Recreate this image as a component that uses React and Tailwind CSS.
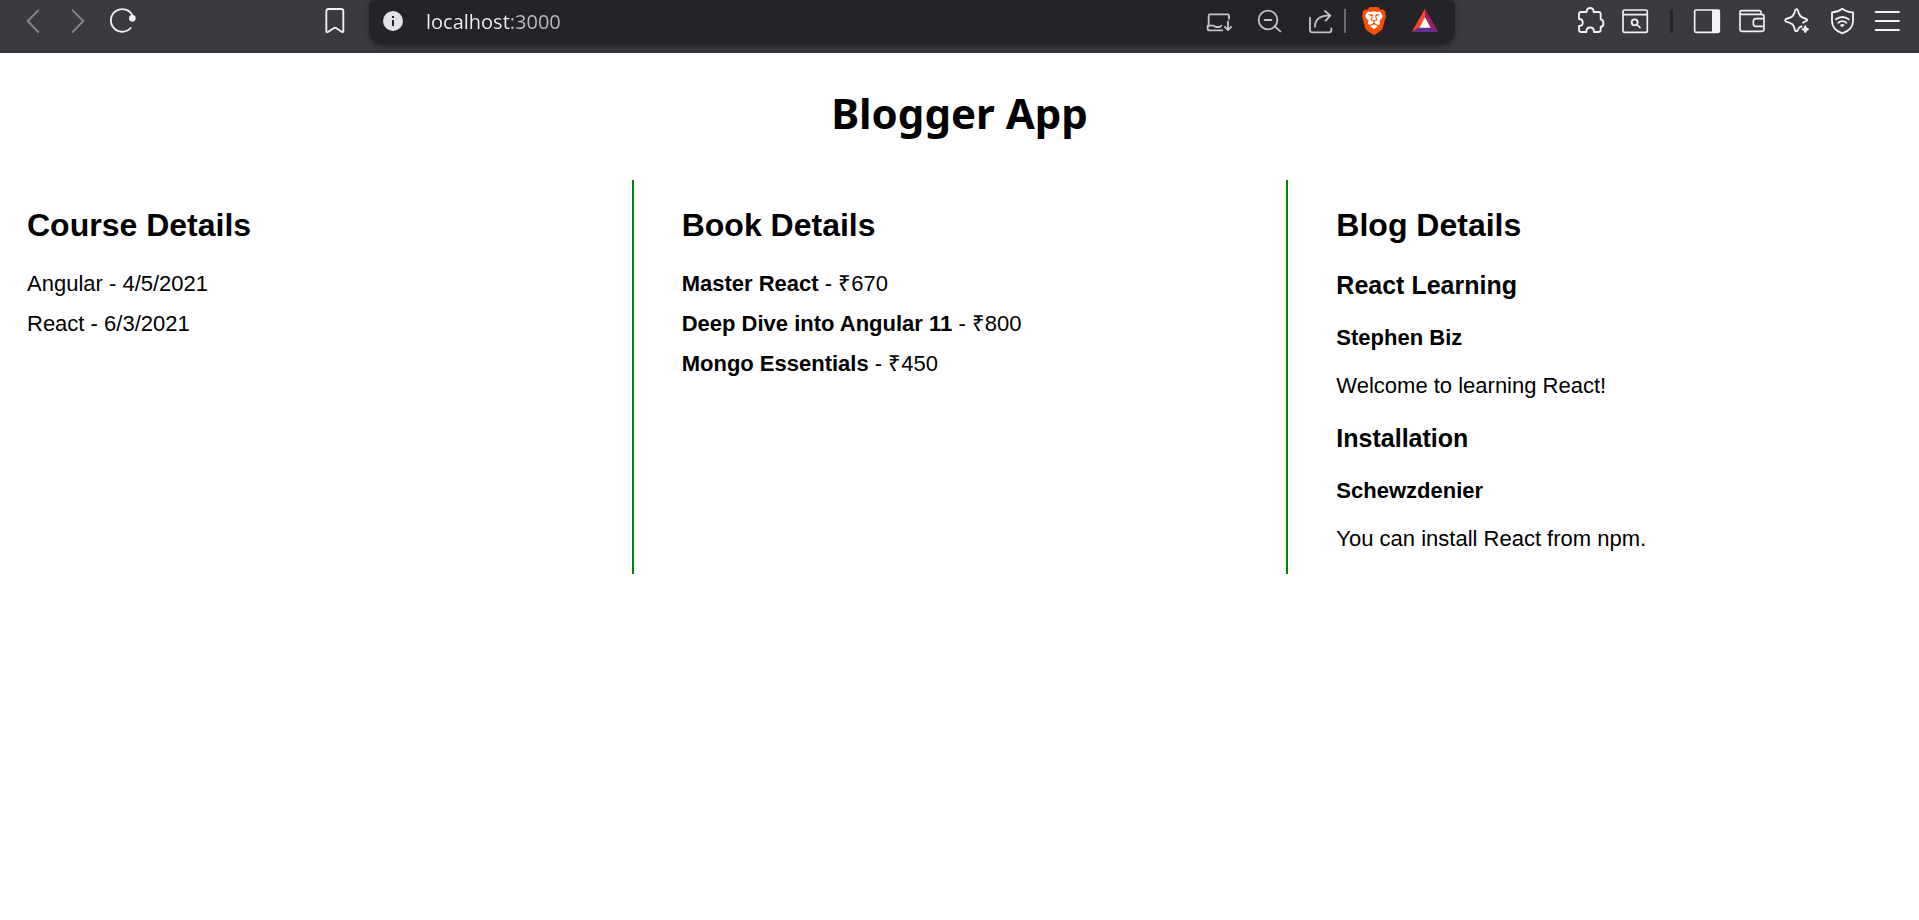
import React from "react";
import { SiBrave } from "react-icons/si";

/* Toolbar glyphs are drawn on a grid of three units to the pixel. */
function ToolButton({ label, x, children, muted }) {
  return (
    <button
      type="button"
      aria-label={label}
      className={muted ? "h-[42px] w-[45px] shrink-0 text-[#88878b]" : "h-[42px] w-[45px] shrink-0 text-[#f2f1f5]"}
    >
      <svg
        viewBox={`${x} 0 135 126`}
        className="size-full"
        fill="none"
        stroke="currentColor"
        strokeWidth="5.5"
        strokeLinecap="round"
        strokeLinejoin="round"
        aria-hidden="true"
      >
        {children}
      </svg>
    </button>
  );
}

function AddressButton({ label, x, children }) {
  return (
    <button type="button" aria-label={label} className="h-[42px] w-[50px] shrink-0 text-[#c4c3c9]">
      <svg
        viewBox={`${x} 0 150 126`}
        className="size-full"
        fill="none"
        stroke="currentColor"
        strokeWidth="5.5"
        strokeLinecap="round"
        strokeLinejoin="round"
        aria-hidden="true"
      >
        {children}
      </svg>
    </button>
  );
}

function AddressBar() {
  return (
    <div className="flex h-[45px] min-w-0 flex-1 items-start rounded-t-md rounded-b-[14px] bg-[#242328] pr-[5px] pl-[14px] shadow-[0_2px_6px_rgba(0,0,0,0.3)]">
      <button type="button" aria-label="Site information" className="flex h-[42px] w-5 shrink-0 items-center">
        <svg viewBox="0 0 20 20" className="size-5" aria-hidden="true">
          <circle cx="10" cy="10" r="10" fill="#e3e2e7" />
          <path d="M9 5h2v2H9zM9 9h2v6H9z" fill="#242328" />
        </svg>
      </button>
      <input
        aria-label="Address"
        defaultValue="localhost:3000"
        className="ml-[23px] h-[42px] min-w-0 flex-1 bg-[linear-gradient(90deg,#f2f2f6_84px,#bfbec4_84px)] bg-clip-text font-['Open_Sans','Noto_Sans',sans-serif] text-xl text-transparent outline-none"
      />
      <AddressButton label="Install app" x={42}>
        <path d="M86 78V47q0-4 4-4h53q4 0 4 4v9M83 77h19q2 4 7 4h8q5 0 7-4M83 77v9q0 5 5 5h39M144 64v26M135 81l9 9 9-9" />
      </AddressButton>
      <AddressButton label="Zoom out" x={192}>
        <circle cx="264" cy="60" r="28" />
        <path d="M284 79l17 15M254 60h20" />
      </AddressButton>
      <AddressButton label="Share" x={342}>
        <path d="M390 53v37q0 7 7 7h50q7 0 7-7v-5M405 80q0-34 46-34M435 33l16 14-14 15" />
      </AddressButton>
      <div className="mt-[9px] mr-1 h-6 w-[2px] shrink-0 bg-[#6d6c72]" />
      <button type="button" aria-label="Brave Shields" className="h-[42px] w-[50px] shrink-0">
        <svg viewBox="0 0 50 42" className="size-full" aria-hidden="true">
          <path d="M17 11h13l3 5-3 10-6 5-6-5-3-10z" fill="#fff" />
          <g transform="translate(10 7)">
            <SiBrave size={28} color="#fb5006" />
          </g>
        </svg>
      </button>
      <AddressButton label="Rewards" x={660}>
        <g stroke="none">
          <path d="M735 26L695 96L718 83L735 53Z" fill="#ff4724" />
          <path d="M735 26L775 96L752 83L735 53Z" fill="#9e1f63" />
          <path d="M695 96H775L752 82H718Z" fill="#662d91" />
          <path d="M735 52L718 83H752Z" fill="#fff" />
        </g>
      </AddressButton>
    </div>
  );
}

function BrowserBar() {
  return (
    <header className="flex h-[53px] items-start border-b-2 border-[#36333a] bg-[#3b3a3f]">
      <div className="flex w-[369px] shrink-0 items-start pr-3 pl-[10px]">
        <ToolButton label="Back" x={30} muted>
          <path d="M115 31L83 63l32 33" />
        </ToolButton>
        <ToolButton label="Forward" x={165} muted>
          <path d="M218 31l32 32-32 33" />
        </ToolButton>
        <ToolButton label="Reload" x={300}>
          <path d="M392 84A34 34 0 1 1 398 48" />
          <circle cx="397" cy="55" r="10" fill="currentColor" stroke="none" />
        </ToolButton>
        <div className="flex-1" />
        <ToolButton label="Bookmark" x={936}>
          <path d="M979 93V34q0-7 7-7h37q7 0 7 7v59q0 5-4 3l-18-12q-3-2-6 0l-18 12q-5 2-5-3z" />
        </ToolButton>
      </div>
      <AddressBar />
      <div className="flex w-[464px] shrink-0 items-start justify-end pr-[10px]">
        <ToolButton label="Extensions" x={24}>
          <path d="M63 36h17c0-16 21-16 21 0h15q6 0 6 6v16c11 1 11 22 0 23v8q0 7-7 7h-13c0-18-23-18-23 0H64q-7 0-7-7V78c15 0 15-21 0-21V42q0-6 6-6z" />
        </ToolButton>
        <ToolButton label="Search tabs" x={159}>
          <path strokeWidth="5" d="M194 30h63q5 0 5 5v57q0 5-5 5h-63q-5 0-5-5V35q0-5 5-5zM189 44h73M232 75l8 8" />
          <circle cx="224" cy="67" r="9" />
        </ToolButton>
        <div className="flex h-[42px] w-[26px] shrink-0 items-center justify-center">
          <div className="h-6 w-[3px] rounded-full bg-[#242328]" />
        </div>
        <ToolButton label="Sidebar" x={372}>
          <rect x="404" y="30" width="74" height="67" rx="4" strokeWidth="5" />
          <path d="M456 30h19q4 0 4 4v59q0 4-4 4h-19z" fill="currentColor" stroke="none" />
        </ToolButton>
        <ToolButton label="Wallet" x={507}>
          <path
            strokeWidth="5"
            d="M540 36q0-4 4-4h54q5 0 5 5v6M540 36v52q0 6 6 6h59q7 0 7-7V50q0-7-7-7h-60q-5 0-5-6M612 56h-24q-8 0-8 8v7q0 8 8 8h24"
          />
        </ToolButton>
        <ToolButton label="Assistant" x={642}>
          <path d="M725 79q-4 1-7 4-3 3-5 8-4 5-8 0-3-14-8-18-4-4-19-8-5-4 0-8 15-4 20-9 4-4 8-18 4-5 7 0 4 14 8 18 5 5 18 9 5 3 0 6-6 2-10 5" />
          <path d="M736 77q2 9 11 11-9 2-11 11-2-9-11-11 9-2 11-11z" fill="currentColor" strokeWidth="3" />
        </ToolButton>
        <ToolButton label="VPN" x={777}>
          <path d="M847 26q13 10 32 11v26q0 26-32 37-31-11-31-37V37q18-1 31-11z" />
          <path d="M828 58q19-14 38 0M835 68q12-9 24 0" />
          <path d="M841 75q6-4 12 0l-6 5z" fill="currentColor" strokeWidth="2" />
        </ToolButton>
        <ToolButton label="Menu" x={912}>
          <path d="M947 36h70M947 63h70M947 90h70" />
        </ToolButton>
      </div>
    </header>
  );
}

const courses = [
  { name: "Angular", date: "4/5/2021" },
  { name: "React", date: "6/3/2021" },
];

const books = [
  { name: "Master React", price: 670 },
  { name: "Deep Dive into Angular 11", price: 800 },
  { name: "Mongo Essentials", price: 450 },
];

const blogs = [
  { title: "React Learning", author: "Stephen Biz", text: "Welcome to learning React!" },
  { title: "Installation", author: "Schewzdenier", text: "You can install React from npm." },
];

function Column({ title, divided, children }) {
  return (
    <section className={divided ? "flex-1 border-r-2 border-[#008000] pt-[27px] pr-12 pb-[22px]" : "flex-1 pt-[27px] pb-[22px]"}>
      <h2 className="mb-7 text-[32px] leading-9 font-bold">{title}</h2>
      {children}
    </section>
  );
}

export default function App() {
  return (
    <div className="min-h-screen bg-white text-black">
      <BrowserBar />
      <main>
        <h1 className="pt-[31px] pb-[38px] text-center font-['Noto_Sans','Open_Sans',sans-serif] text-[42px] leading-[58px] font-bold">
          Blogger App
        </h1>
        <div className="flex gap-12 pr-[26px] pl-[27px] font-['Liberation_Sans',Arial,sans-serif] text-[22px] leading-[26px]">
          <Column title="Course Details" divided>
            <ul className="flex flex-col gap-[14px]">
              {courses.map((c) => (
                <li key={c.name}>
                  {c.name} - {c.date}
                </li>
              ))}
            </ul>
          </Column>
          <Column title="Book Details" divided>
            <ul className="flex flex-col gap-[14px]">
              {books.map((b) => (
                <li key={b.name}>
                  <strong>{b.name}</strong> - ₹{b.price}
                </li>
              ))}
            </ul>
          </Column>
          <Column title="Blog Details">
            <div className="flex flex-col gap-[25px]">
              {blogs.map((b) => (
                <article key={b.title}>
                  <h3 className="text-[25px] leading-7 font-bold">{b.title}</h3>
                  <h4 className="mt-[26px] font-bold">{b.author}</h4>
                  <p className="mt-[22px]">{b.text}</p>
                </article>
              ))}
            </div>
          </Column>
        </div>
      </main>
    </div>
  );
}
